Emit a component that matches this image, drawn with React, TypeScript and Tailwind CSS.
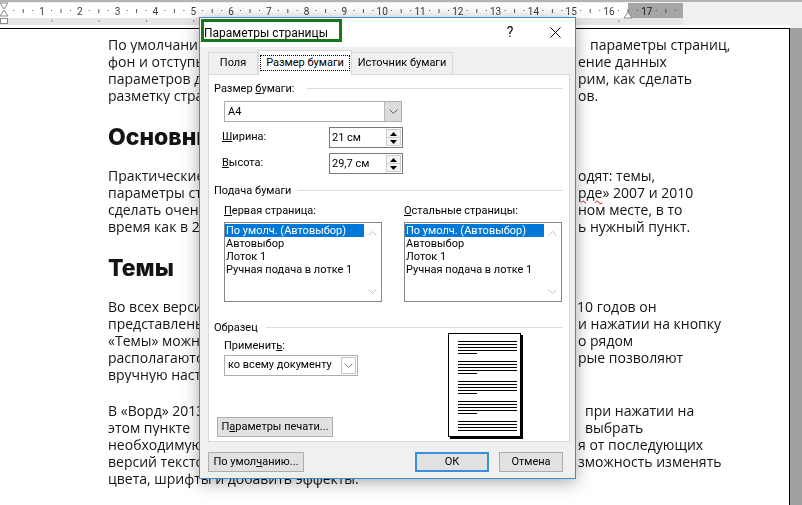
import type { ReactNode } from "react"

type Line = { l: ReactNode; r?: ReactNode; ml?: string; full?: boolean }

const cm = Array.from({ length: 18 }, (_, i) => 4.2 + 37.8 * i)
const tabStops = Array.from({ length: 13 }, (_, i) => 4.2 + 47.25 * (i + 1))

function Wavy({ children }: { children: ReactNode }) {
  return <span className="underline decoration-wavy decoration-red-600 decoration-1 underline-offset-2">{children}</span>
}

// the middle of each line sits under the dialog, so only the two visible ends are set
const para1: Line[] = [
  { l: "По умолчанию", r: "параметры страниц,", ml: "ml-[390px]" },
  { l: "фон и отступы", r: "ение данных" },
  { l: "параметров для", r: "рим, как сделать" },
  { l: "разметку страниц", r: "ов." },
]

const para2: Line[] = [
  { l: "Практические", r: "одят: темы," },
  { l: "параметры страницы", r: <><Wavy>рде</Wavy>» 2007 и 2010</> },
  { l: "сделать очень", r: "ном месте, в то" },
  { l: "время как в 2013", r: "ь нужный пункт." },
]

const para3: Line[] = [
  { l: "Во всех версиях", r: "10 годов он", ml: "ml-[377px]" },
  { l: "представлены", r: "и нажатии на кнопку" },
  { l: "«Темы» можно", r: "о рядом" },
  { l: "располагаются", r: "рые позволяют" },
  { l: "вручную настроить" },
]

const para4: Line[] = [
  { l: <>В «<Wavy>Ворд</Wavy>» 2013</>, r: "при нажатии на", ml: "ml-[385px]" },
  { l: "этом пункте", r: "выбрать", ml: "ml-[385px]" },
  { l: "необходимую", r: "я от последующих" },
  { l: "версий текстового", r: "зможность изменять" },
  { l: "цвета, шрифты и добавить эффекты.", full: true },
]

function Para({ lines }: { lines: Line[] }) {
  return (
    <div className="mb-[19px]">
      {lines.map((ln, i) => (
        <div key={i} className="flex whitespace-nowrap h-[17px]">
          {ln.full ? (
            <span>{ln.l}</span>
          ) : (
            <span className="w-[92px] shrink-0 overflow-hidden">{ln.l}</span>
          )}
          {ln.r && <span className={ln.ml ?? "ml-[378px]"}>{ln.r}</span>}
        </div>
      ))}
    </div>
  )
}

function Ruler() {
  return (
    <svg width="802" height="28" className="block">
      <rect x="0" y="0" width="802" height="28" fill="#f0f0f0" />
      <rect x="0" y="0" width="802" height="2" fill="#b3b3b3" />
      <rect x="0" y="3" width="628" height="15" fill="#ffffff" />
      <rect x="628" y="3" width="55" height="15" fill="#a6a6a6" />
      <rect x="0" y="18" width="683" height="7" fill="#e6e6e6" />
      <rect x="0" y="25" width="790" height="3" fill="#ffffff" />
      {cm.map((x, i) => (
        <g key={i}>
          {i > 0 && (
            <text x={x} y="15" fontSize="10" textAnchor="middle" fill={i === 17 ? "#1a1a1a" : "#3a3a3a"} fontFamily="Roboto, sans-serif">
              {i}
            </text>
          )}
          {x + 28 < 683 && (
            <>
              <rect x={x + 9} y="10" width="1" height="1" fill="#555" />
              <rect x={x + 18.5} y="9" width="1" height="4" fill="#555" />
              <rect x={x + 28} y="10" width="1" height="1" fill="#555" />
            </>
          )}
        </g>
      ))}
      {tabStops.map((x, i) => (
        <rect key={i} x={x} y="20" width="1" height="2" fill="#8a8a8a" />
      ))}
      <polygon points="0,3 8,3 4,9" fill="#fff" stroke="#8a8a8a" strokeWidth="1" />
      <polygon points="0,16 8,16 4,10" fill="#fff" stroke="#8a8a8a" strokeWidth="1" />
      <rect x="0.5" y="18.5" width="7" height="5" fill="#fff" stroke="#8a8a8a" />
      <polygon points="624,18 628,12 632,18" fill="#fff" stroke="#8a8a8a" strokeWidth="1" />
    </svg>
  )
}

function Chevron({ color = "#606060", up = false }: { color?: string; up?: boolean }) {
  return (
    <svg width="9" height="5" className="block">
      <polyline points={up ? "0.5,4.5 4.5,0.5 8.5,4.5" : "0.5,0.5 4.5,4.5 8.5,0.5"} fill="none" stroke={color} strokeWidth="1" />
    </svg>
  )
}

function GroupHeader({ children, gap }: { children: ReactNode; gap: string }) {
  return (
    <div className="flex items-center h-[14px] pl-[5px] pr-[6px]">
      <span className="leading-none">{children}</span>
      <div className={`flex-1 h-px bg-[#dcdcdc] ${gap}`} />
    </div>
  )
}

function SpinField({ label, value }: { label: ReactNode; value: string }) {
  return (
    <div className="flex items-center h-[21px] ml-[13px]">
      <span className="w-[107px]">{label}</span>
      <div className="w-[74px] h-[21px] border border-[#7a7a7a] bg-white flex">
        <span className="flex-1 pl-[2px] leading-[19px]">{value}</span>
        <div className="w-[15px] my-[1px] mr-[1px] flex flex-col border border-[#cfcfcf] bg-[#f4f4f4]">
          <div className="flex-1 flex items-center justify-center border-b border-[#cfcfcf]">
            <svg width="7" height="4"><polygon points="0,4 3.5,0 7,4" fill="#000" /></svg>
          </div>
          <div className="flex-1 flex items-center justify-center">
            <svg width="7" height="4"><polygon points="0,0 3.5,4 7,0" fill="#000" /></svg>
          </div>
        </div>
      </div>
    </div>
  )
}

const trays = ["По умолч. (Автовыбор)", "Автовыбор", "Лоток 1", "Ручная подача в лотке 1"]

function TrayList() {
  return (
    <div className="w-[158px] h-[80px] border border-[#828790] bg-white flex">
      <div className="flex-1 pt-px">
        {trays.map((t, i) => (
          <div key={t} className={`h-[13px] leading-[13px] pl-px ${i === 0 ? "bg-[#0078d7] text-white" : ""}`}>
            {t}
          </div>
        ))}
      </div>
      <div className="w-[17px] flex flex-col justify-between items-center pt-[8px] pb-[7px]">
        <Chevron color="#c4c4c4" up />
        <Chevron color="#c4c4c4" />
      </div>
    </div>
  )
}

function PreviewPage() {
  const groups = [5, 5, 5, 5, 4]
  return (
    <div className="w-[73px] h-[104px] border border-black bg-white shadow-[2px_2px_0_#000] pl-[9px] pt-[7px] flex flex-col gap-[7px] -mt-px">
      {groups.map((n, g) => (
        <div key={g} className="flex flex-col gap-[2px]">
          {Array.from({ length: n }, (_, i) => (
            <div key={i} className={`h-px bg-black ${i === 4 ? "w-[19px]" : "w-[59px]"}`} />
          ))}
        </div>
      ))}
    </div>
  )
}

function Button({ children, w, primary }: { children: ReactNode; w: string; primary?: boolean }) {
  return (
    <div
      className={`${w} h-[20px] flex items-center justify-center bg-[#e1e1e1] ${
        primary ? "border-2 border-[#3c8fdb]" : "border border-[#adadad]"
      }`}
    >
      {children}
    </div>
  )
}

function PageSetupDialog() {
  return (
    <div className="absolute left-[199px] top-[17px] w-[377px] h-[462px] border border-[#3d8ad6] bg-[#f0f0f0] shadow-[0_3px_16px_rgba(0,0,0,0.35)] font-['Roboto',sans-serif] text-[11px] text-black whitespace-nowrap flex flex-col">
      {/* title bar */}
      <div className="h-[29px] bg-white flex items-center pl-[4px] text-[12px]">
        <span>Параметры страницы</span>
        <span className="ml-auto w-[14px] text-center text-[14px]">?</span>
        <span className="ml-[23px] mr-[5px] w-[30px] flex justify-center">
          <svg width="11" height="11">
            <path d="M0.5 0.5 L10.5 10.5 M10.5 0.5 L0.5 10.5" stroke="#000" strokeWidth="1" />
          </svg>
        </span>
      </div>

      {/* tabs */}
      <div className="h-[27px] flex items-end pl-[8px]">
        <div className="w-[50px] h-[22px] border border-b-0 border-[#d9d9d9] flex items-center justify-center">Поля</div>
        <div className="w-[94px] h-[25px] -mb-px bg-white border border-b-0 border-[#d9d9d9] relative z-10 flex items-center justify-center">
          <span className="px-[5px] leading-[14px] border border-dotted border-black">Размер бумаги</span>
        </div>
        <div className="w-[101px] h-[22px] border border-b-0 border-l-0 border-[#d9d9d9] flex items-center justify-center">
          Источник бумаги
        </div>
      </div>

      {/* panel */}
      <div className="ml-[8px] w-[362px] h-[368px] bg-white border border-[#d9d9d9] flex flex-col">
        <div className="mt-[6px]">
          <GroupHeader gap="ml-[13px]">
            Размер <u>б</u>умаги:
          </GroupHeader>
        </div>
        <div className="mt-[6px] ml-[15px] w-[178px] h-[21px] border border-[#adadad] bg-white flex">
          <span className="flex-1 pl-[3px] leading-[19px]">A4</span>
          <div className="w-[17px] bg-[#dcdcdc] border-l border-[#b8b8b8] flex items-center justify-center">
            <Chevron />
          </div>
        </div>
        <div className="mt-[5px]">
          <SpinField label={<><u>Ш</u>ирина:</>} value="21 см" />
        </div>
        <div className="mt-[5px]">
          <SpinField label={<><u>В</u>ысота:</>} value="29,7 см" />
        </div>

        <div className="mt-[9px]">
          <GroupHeader gap="ml-[6px]">Подача бумаги</GroupHeader>
        </div>
        <div className="mt-[7px] pl-[15px] flex gap-[22px]">
          <div className="flex flex-col gap-[4px]">
            <span className="h-[14px] leading-[14px]">
              <u>П</u>ервая страница:
            </span>
            <TrayList />
          </div>
          <div className="flex flex-col gap-[4px]">
            <span className="h-[14px] leading-[14px]">
              <u>О</u>стальные страницы:
            </span>
            <TrayList />
          </div>
        </div>

        <div className="mt-[18px]">
          <GroupHeader gap="ml-[8px]">Образец</GroupHeader>
        </div>
        <div className="flex">
          <div className="w-[239px] flex flex-col">
            <span className="mt-[5px] ml-[15px] h-[14px] leading-[14px]">
              Применит<u>ь</u>:
            </span>
            <div className="mt-[2px] ml-[15px] w-[134px] h-[21px] border border-[#adadad] bg-white flex items-center">
              <span className="flex-1 pl-[3px]">ко всему документу</span>
              <div className="w-[15px] h-[17px] mr-px border border-[#c4c4c4] flex items-center justify-center">
                <Chevron color="#8a8a8a" />
              </div>
            </div>
            <div className="mt-[41px] ml-[8px]">
              <Button w="w-[116px]">
                П<u>а</u>раметры печати...
              </Button>
            </div>
          </div>
          <PreviewPage />
        </div>
      </div>

      {/* buttons */}
      <div className="mt-[10px] flex pl-[8px] pr-[12px]">
        <Button w="w-[96px]">
          По умол<u>ч</u>анию...
        </Button>
        <div className="ml-auto flex gap-[10px]">
          <Button w="w-[74px]" primary>
            ОК
          </Button>
          <Button w="w-[64px]">Отмена</Button>
        </div>
      </div>
    </div>
  )
}

export default function App() {
  return (
    <div className="relative w-[802px] h-[505px] overflow-hidden bg-white font-['Open_Sans',sans-serif] text-[#141414]">
      <Ruler />
      <div className="flex h-[477px]">
        <div className="w-[790px] shrink-0 border-t border-r border-black bg-white pl-[108px] pt-[7px] text-[14px] leading-[17px]">
          <Para lines={para1} />
          <h2 className="w-[92px] overflow-hidden whitespace-nowrap font-['Inter',sans-serif] font-extrabold text-[23px] leading-[28px] mb-[16px]">
            Основные
          </h2>
          <Para lines={para2} />
          <h2 className="font-['Inter',sans-serif] font-extrabold text-[23px] leading-[28px] mb-[16px]">Темы</h2>
          <Para lines={para3} />
          <Para lines={para4} />
        </div>
        <div className="flex-1 bg-[#a0a0a0]" />
      </div>

      <PageSetupDialog />

      {/* annotation marks over the screenshot */}
      <div className="absolute left-[201px] top-[19px] w-[141px] h-[23px] border-[3px] border-[#16781a]" />
      <div className="absolute left-[262px] top-[51px] w-[89px] h-[22px] rounded-[11px] bg-[#86c486] mix-blend-multiply" />
    </div>
  )
}
